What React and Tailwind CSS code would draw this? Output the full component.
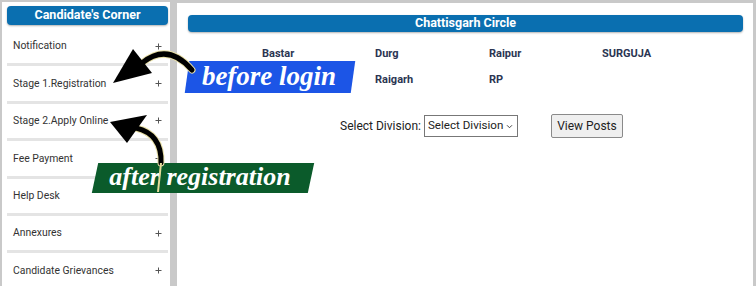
import React from "react";

const items = [
  { label: "Notification", plus: true },
  { label: "Stage 1.Registration", plus: true },
  { label: "Stage 2.Apply Online", plus: true },
  { label: "Fee Payment", plus: true },
  { label: "Help Desk", plus: false },
  { label: "Annexures", plus: true },
  { label: "Candidate Grievances", plus: true },
];

export default function App() {
  return (
    <div className="relative w-[756px] h-[286px] overflow-hidden bg-[#c9c9c9] flex font-['Roboto',sans-serif]">
      {/* Left panel */}
      <div className="mt-[2px] ml-[2px] w-[168px] h-[290px] bg-white pl-[5px] pr-[2px] pt-[4px] flex flex-col">
        <div className="h-[19px] rounded-[4px] bg-[#0a6fb0] text-white font-bold text-[12.5px] flex items-center justify-center shadow-[0_1px_2px_rgba(0,0,0,0.3)]">
          Candidate's Corner
        </div>
        <div className="mt-[4px] flex flex-col">
          {items.map((it) => (
            <div
              key={it.label}
              className="h-[37.4px] border-b-[3px] border-[#e4e4e4] flex items-center justify-between pl-[6px] pr-[6px] text-[10.4px] text-[#333]"
            >
              <span>{it.label}</span>
              {it.plus && (
                <svg width="7" height="7" viewBox="0 0 7 7">
                  <path d="M3.5 0.5 V6.5 M0.5 3.5 H6.5" stroke="#555" strokeWidth="1" />
                </svg>
              )}
            </div>
          ))}
        </div>
      </div>

      {/* Right panel */}
      <div className="mt-[3px] ml-[7px] w-[576px] h-[290px] bg-white pt-[12px] pl-[11px] pr-[10px]">
        <div className="h-[17px] rounded-[4px] bg-[#0a6fb0] text-white font-bold text-[12.5px] flex items-center justify-center shadow-[0_1px_2px_rgba(0,0,0,0.3)]">
          Chattisgarh Circle
        </div>
        <div className="ml-[74px] mt-[9px] grid grid-cols-[113px_114px_113px_113px] text-[11px] font-bold text-[#2b3552]">
          <div className="h-[26px] flex items-center">Bastar</div>
          <div className="h-[26px] flex items-center">Durg</div>
          <div className="h-[26px] flex items-center">Raipur</div>
          <div className="h-[26px] flex items-center">SURGUJA</div>
          <div className="h-[26px]"></div>
          <div className="h-[26px] flex items-center">Raigarh</div>
          <div className="h-[26px] flex items-center">RP</div>
          <div className="h-[26px]"></div>
        </div>
        <div className="mt-[21px] flex items-center text-[12px] text-[#222]">
          <span className="ml-[152px] whitespace-nowrap">Select Division:</span>
          <div className="ml-[3px] h-[22px] w-[94px] border border-[#777] flex items-center justify-between pl-[3px] pr-[4px] whitespace-nowrap">
            <span className="text-[11.6px]">Select Division</span>
            <svg width="7" height="5" viewBox="0 0 8 6">
              <path d="M1 1.5 L4 4.5 L7 1.5" fill="none" stroke="#444" strokeWidth="1.2" />
            </svg>
          </div>
          <div className="ml-[33px] h-[24px] w-[72px] border border-[#8a8a8a] rounded-[2px] bg-[#efefef] flex items-center justify-center whitespace-nowrap">
            View Posts
          </div>
        </div>
      </div>

      {/* Overlay labels */}
      <div className="absolute left-[187px] top-[61px] w-[166px] h-[32px] bg-[#1c55e6] -skew-x-[8deg]"></div>
      <div className="absolute left-[186px] top-[61px] w-[166px] h-[32px] flex items-center justify-center text-white italic font-bold text-[27px] leading-none font-['Liberation_Serif',serif] pb-[2px]">
        before login
      </div>

      <div className="absolute left-[95px] top-[163px] w-[216px] h-[30px] bg-[#0b5b2b] -skew-x-[12deg]"></div>
      <div className="absolute left-[92px] top-[163px] w-[216px] h-[30px] flex items-center justify-center text-white italic font-bold text-[26px] leading-none font-['Liberation_Serif',serif] pb-[2px]">
        after registration
      </div>

      {/* Arrows */}
      <svg className="absolute left-0 top-0" width="756" height="286" viewBox="0 0 756 286">
        <path d="M142 63 Q168 42 192 70" fill="none" stroke="#e8dfa6" strokeWidth="7" strokeLinecap="round" />
        <path d="M142 63 Q168 42 192 70" fill="none" stroke="#000" strokeWidth="5" strokeLinecap="round" />
        <polygon points="133,49 113,83 152,73" fill="#000" />
        <path d="M136 128 Q162 134 161 163" fill="none" stroke="#e8dfa6" strokeWidth="7" strokeLinecap="round" />
        <path d="M136 128 Q162 134 161 163" fill="none" stroke="#000" strokeWidth="5" strokeLinecap="round" />
        <path d="M161 163 L158 192" fill="none" stroke="#e6dc9a" strokeWidth="2" />
        <polygon points="110,122 147,115 127,143" fill="#000" />
      </svg>
    </div>
  );
}
